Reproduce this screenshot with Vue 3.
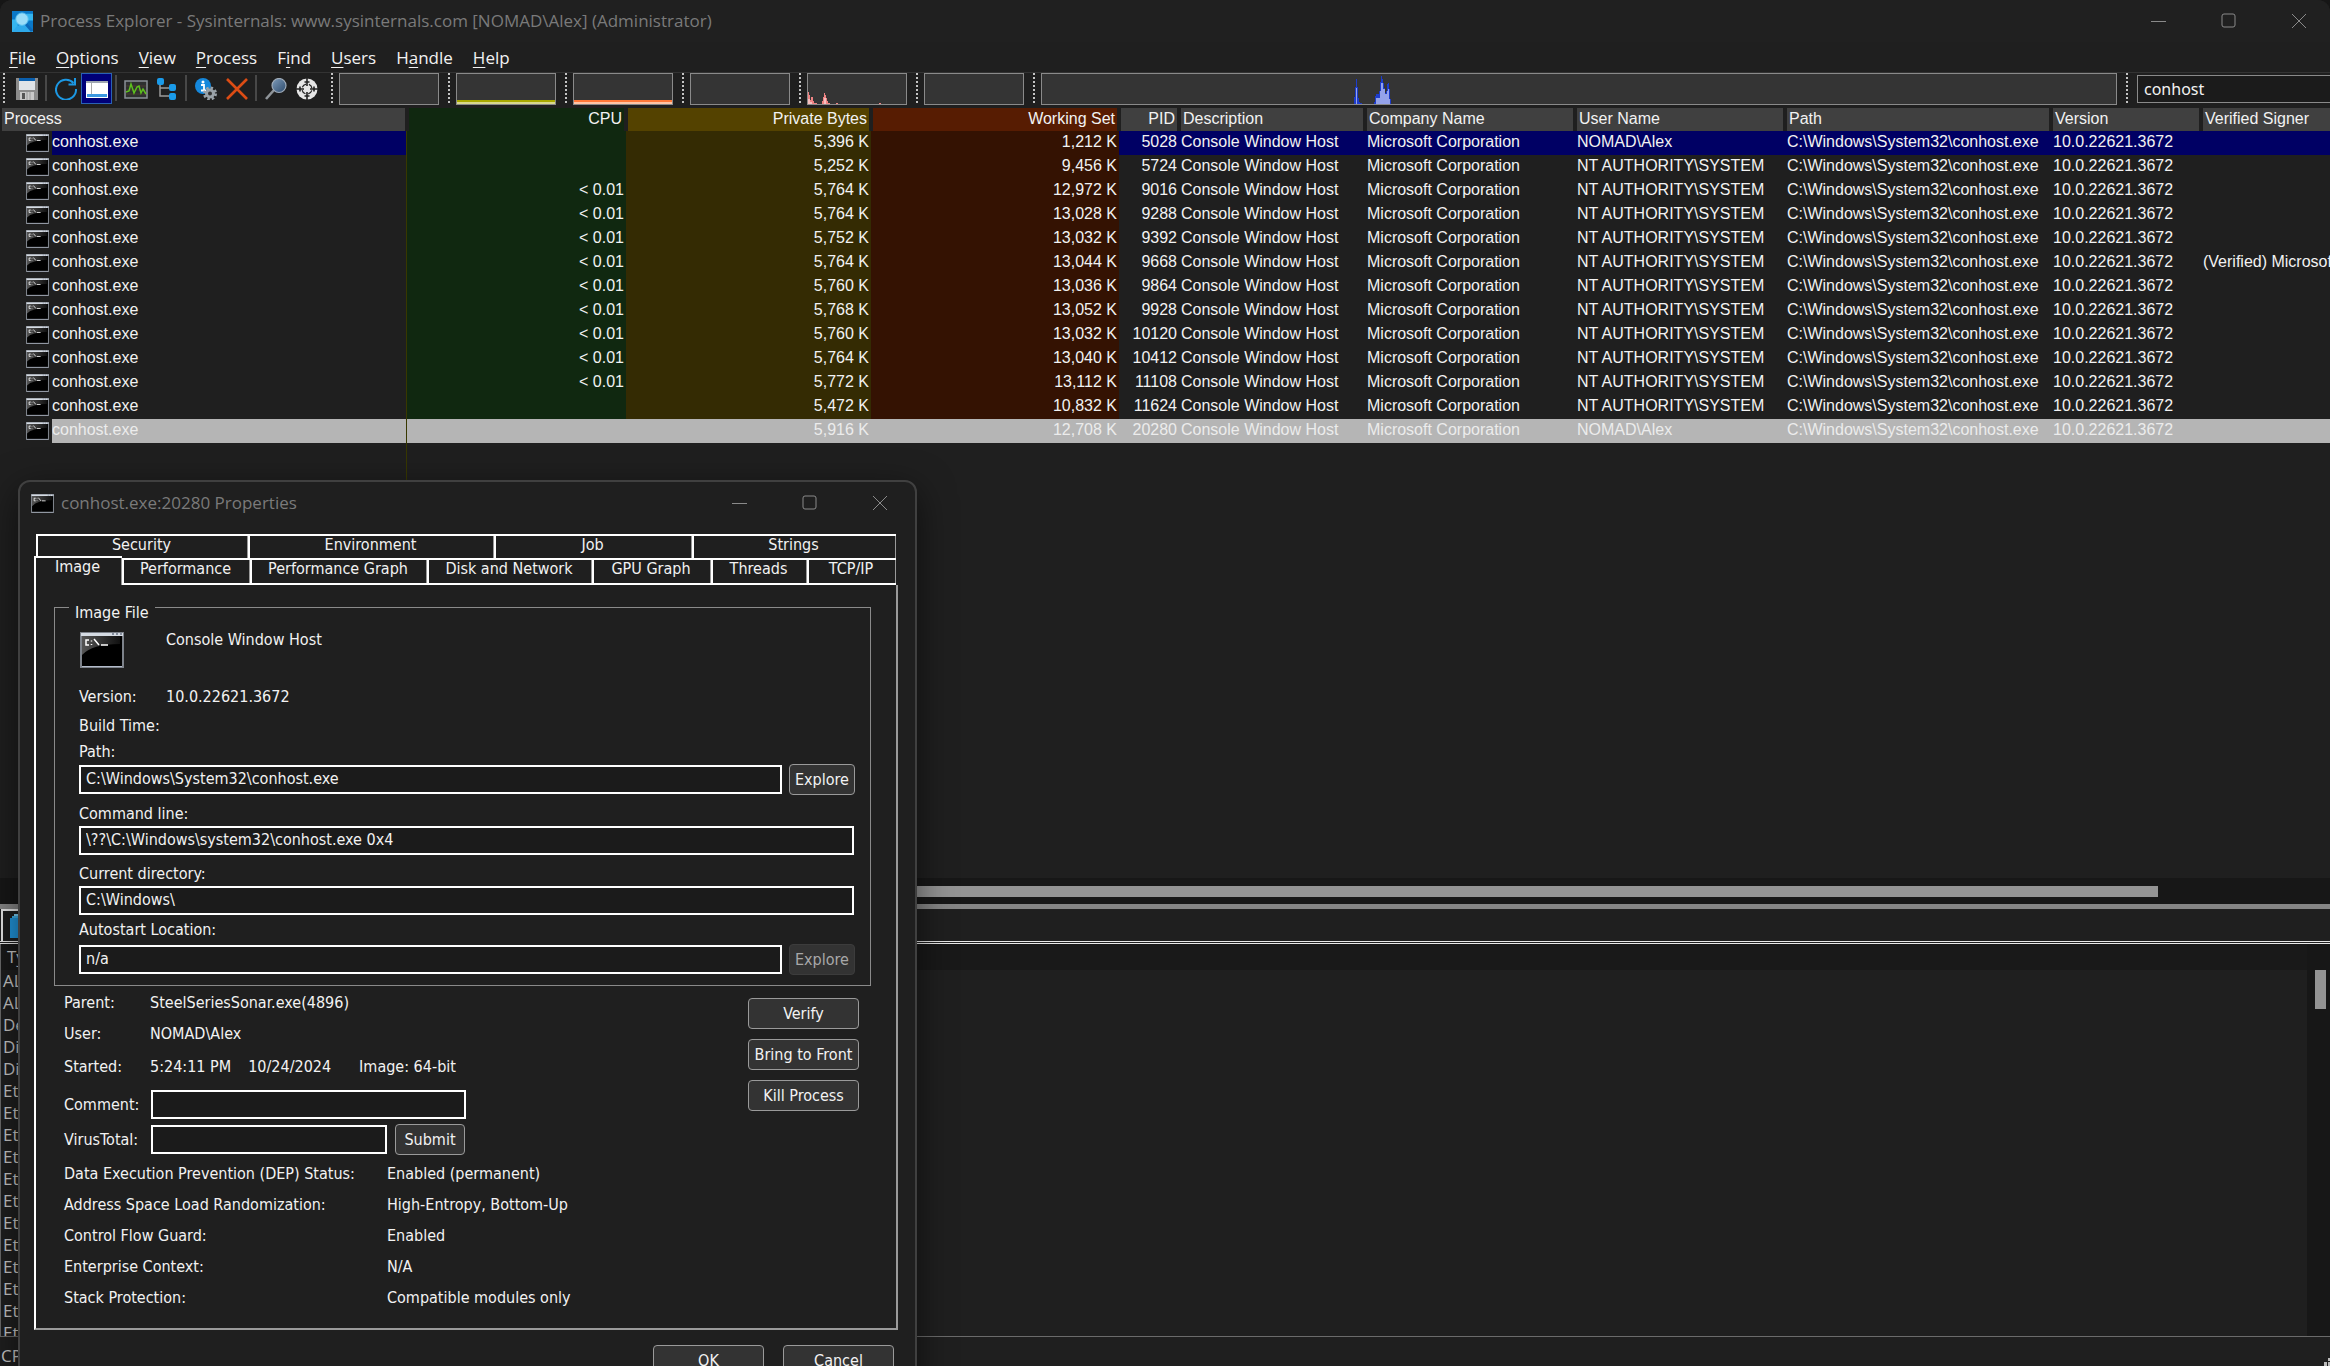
<script setup>
import { ref, reactive } from 'vue'

const menus = [
  ['', 'F', 'ile'],
  ['', 'O', 'ptions'],
  ['', 'V', 'iew'],
  ['', 'P', 'rocess'],
  ['F', 'i', 'nd'],
  ['', 'U', 'sers'],
  ['H', 'a', 'ndle'],
  ['', 'H', 'elp'],
]

const columns = [
  { key: 'name', label: 'Process' },
  { key: 'cpu', label: 'CPU' },
  { key: 'bytes', label: 'Private Bytes' },
  { key: 'ws', label: 'Working Set' },
  { key: 'pid', label: 'PID' },
  { key: 'desc', label: 'Description' },
  { key: 'company', label: 'Company Name' },
  { key: 'user', label: 'User Name' },
  { key: 'path', label: 'Path' },
  { key: 'version', label: 'Version' },
  { key: 'signer', label: 'Verified Signer' },
]

const SYSTEM = 'NT AUTHORITY\\SYSTEM'
const ALEX = 'NOMAD\\Alex'
const low = '< 0.01'

const rows = [
  ['', '5,396 K', '1,212 K', 5028, ALEX, '', 'own'],
  ['', '5,252 K', '9,456 K', 5724, SYSTEM],
  [low, '5,764 K', '12,972 K', 9016, SYSTEM],
  [low, '5,764 K', '13,028 K', 9288, SYSTEM],
  [low, '5,752 K', '13,032 K', 9392, SYSTEM],
  [low, '5,764 K', '13,044 K', 9668, SYSTEM, '(Verified) Microsoft Windows'],
  [low, '5,760 K', '13,036 K', 9864, SYSTEM],
  [low, '5,768 K', '13,052 K', 9928, SYSTEM],
  [low, '5,760 K', '13,032 K', 10120, SYSTEM],
  [low, '5,764 K', '13,040 K', 10412, SYSTEM],
  [low, '5,772 K', '13,112 K', 11108, SYSTEM],
  ['', '5,472 K', '10,832 K', 11624, SYSTEM],
  ['', '5,916 K', '12,708 K', 20280, ALEX, '', 'selected'],
].map(([cpu, bytes, ws, pid, user, signer = '', state = '']) => ({
  cpu, bytes, ws, pid, user, signer, state,
  name: 'conhost.exe',
  desc: 'Console Window Host',
  company: 'Microsoft Corporation',
  path: 'C:\\Windows\\System32\\conhost.exe',
  version: '10.0.22621.3672',
}))

const handles = [
  'ALPC Port', 'ALPC Port', 'Desktop', 'Directory', 'Directory',
  ...Array(12).fill('EtwRegistration'),
]

const backTabs = ['Security', 'Environment', 'Job', 'Strings']
const frontTabs = ['Image', 'Performance', 'Performance Graph', 'Disk and Network', 'GPU Graph', 'Threads', 'TCP/IP']

const filter = ref('conhost')
const form = reactive({
  path: 'C:\\Windows\\System32\\conhost.exe',
  command: '\\??\\C:\\Windows\\system32\\conhost.exe 0x4',
  directory: 'C:\\Windows\\',
  autostart: 'n/a',
  comment: '',
  virusTotal: '',
})

const mitigations = [
  ['Data Execution Prevention (DEP) Status:', 'Enabled (permanent)'],
  ['Address Space Load Randomization:', 'High-Entropy, Bottom-Up'],
  ['Control Flow Guard:', 'Enabled'],
  ['Enterprise Context:', 'N/A'],
  ['Stack Protection:', 'Compatible modules only'],
]
</script>

<template>
  <div class="window">
    <svg class="defs" width="0" height="0" aria-hidden="true">
      <defs>
        <linearGradient id="sheen" x1="0" y1="0" x2="1" y2="0">
          <stop offset="0" stop-color="#6a6a6a" />
          <stop offset="1" stop-color="#151515" />
        </linearGradient>
        <linearGradient id="lens" x1="0" y1="0" x2="1" y2="1">
          <stop offset="0" stop-color="#7f9cba" />
          <stop offset="1" stop-color="#2c4a6c" />
        </linearGradient>
        <symbol id="console" viewBox="0 0 44 36" preserveAspectRatio="none">
          <rect x="0" y="0" width="44" height="36" fill="#7d828a" />
          <rect x="1" y="1" width="42" height="3" fill="#d5dbe3" />
          <path d="M32 2h2M36 2h2M40 2h2" stroke="#6b7686" stroke-width="1.5" />
          <rect x="2" y="4" width="40" height="30" fill="#000" />
          <path d="M2 4H40V12Q12 12 2 23Z" fill="url(#sheen)" opacity=".8" />
          <path d="M9 8H6V13H9M11.500 8.500v1M11.500 12v1M14 7L19 13M21 13h7" fill="none" stroke="#fff" stroke-width="1.500" />
          <path d="M2 34.500H42" stroke="#b4bccb" />
        </symbol>
      </defs>
    </svg>

    <header class="titlebar">
      <svg class="app-icon" viewBox="0 0 22 22">
        <rect width="22" height="22" fill="#0a78c8" />
        <path d="M0 9h6v13H0zM15 3h7v7h-7z" fill="#35b5ee" />
        <path d="M14 12l8 10H0l5-6z" fill="#2ea9ea" />
        <path d="M14 13l7 8" stroke="#0c68b8" stroke-width="3" />
        <circle cx="10.500" cy="8.500" r="6.500" fill="#9adcf8" stroke="#5cc3f2" />
      </svg>
      <h1>Process Explorer - Sysinternals: www.sysinternals.com [NOMAD\Alex] (Administrator)</h1>
      <div class="controls">
        <button aria-label="Minimize"><svg viewBox="0 0 16 16"><path d="M0 8.500H15" /></svg></button>
        <button aria-label="Maximize"><svg viewBox="0 0 16 16"><rect x="1" y="1" width="13" height="13" rx="2" /></svg></button>
        <button aria-label="Close"><svg viewBox="0 0 16 16"><path d="M1 1L15 15M15 1L1 15" /></svg></button>
      </div>
    </header>

    <nav class="menubar">
      <button v-for="m in menus" :key="m.join('')">{{ m[0] }}<u>{{ m[1] }}</u>{{ m[2] }}</button>
    </nav>

    <div class="toolbar">
      <i class="grip first"></i>
      <button aria-label="Save">
        <svg viewBox="0 0 22 22">
          <rect width="22" height="22" fill="#8b8b8b" />
          <rect x="3" width="16" height="12" fill="#dfe3e8" /><rect x="3" width="16" height="3" fill="#0a5fae" />
          <rect x="4" y="14" width="14" height="8" fill="#c9c9c9" /><rect x="6" y="15" width="3" height="6" fill="#555" />
          <path d="M11 14v8M14 14v8" stroke="#9a9a9a" />
        </svg>
      </button>
      <i class="sep"></i>
      <button aria-label="Refresh">
        <svg viewBox="0 0 22 22"><path d="M18.500 5A10 10 0 1 0 21 11M20 0V6.500H13.500" fill="none" stroke="#1c97e2" stroke-width="2" /></svg>
      </button>
      <button class="pressed" aria-label="Show lower pane">
        <svg viewBox="0 0 22 22">
          <rect x="0" y="3" width="22" height="17" fill="#fff" /><rect x="0" y="3" width="22" height="2" fill="#9fa6b0" />
          <path d="M5.500 5V16" stroke="#aaa" /><rect x="1" y="16" width="20" height="3" fill="#3c98e0" />
        </svg>
      </button>
      <i class="sep"></i>
      <button aria-label="System information">
        <svg class="wide" viewBox="0 0 24 22">
          <rect x="1" y="3" width="22" height="17" fill="#2e3030" stroke="#8a9096" stroke-width="1.500" />
          <path d="M2 8h20M2 12h20M2 16h20" stroke="#4a3a30" />
          <path d="M2 14L5 13L7 6L10 15L13 9L15 8L17 15L19 11L22 16" fill="none" stroke="#5cc01e" stroke-width="1.500" />
        </svg>
      </button>
      <button aria-label="Process tree">
        <svg viewBox="0 0 22 22">
          <path d="M4 6V18H14M4 10H14" fill="none" stroke="#9a9a9a" stroke-width="1.500" />
          <rect x="1" y="0" width="7" height="7" rx="2" fill="#1a9bea" />
          <rect x="13" y="6" width="7" height="7" rx="2" fill="#1a9bea" /><rect x="13" y="15" width="7" height="7" rx="2" fill="#1a9bea" />
        </svg>
      </button>
      <i class="sep"></i>
      <button aria-label="Properties">
        <svg viewBox="0 0 22 22">
          <circle cx="8" cy="8" r="8" fill="#1588dc" /><circle cx="8" cy="4" r="1.500" fill="#fff" /><path d="M6 7h3v5M6 12.500h5" stroke="#fff" stroke-width="1.800" fill="none" />
          <circle cx="15" cy="15.500" r="5.500" fill="none" stroke="#9aa2a8" stroke-width="3" stroke-dasharray="2.400 1.900" />
          <circle cx="15" cy="15.500" r="3.500" fill="#333" stroke="#9aa2a8" stroke-width="3" />
        </svg>
      </button>
      <button aria-label="Kill process">
        <svg viewBox="0 0 22 22"><path d="M1 1L21 21M21 1L1 21" stroke="#dc4c14" stroke-width="2.600" /></svg>
      </button>
      <i class="sep"></i>
      <button aria-label="Find handle">
        <svg viewBox="0 0 22 22">
          <path d="M1 21L9 12" stroke="#8f9499" stroke-width="2.600" />
          <circle cx="14" cy="7.500" r="7" fill="url(#lens)" stroke="#9fabb8" stroke-width="1.200" />
        </svg>
      </button>
      <button aria-label="Find window's process">
        <svg viewBox="0 0 22 22">
          <circle cx="11" cy="11" r="10.500" fill="#e6e6e6" />
          <circle cx="11" cy="11" r="5" fill="none" stroke="#222" stroke-width="1.200" stroke-dasharray="5 2.850" stroke-dashoffset="-1.400" />
          <path d="M11 0V8M11 14V22M0 11H8M14 11H22M8.500 4h5M8.500 18h5M4 8.500v5M18 8.500v5" stroke="#222" stroke-width="1.600" />
        </svg>
      </button>

      <i class="grip"></i><div class="graph"></div>
      <i class="grip"></i><div class="graph commit"></div>
      <i class="grip"></i><div class="graph physical"></div>
      <i class="grip"></i><div class="graph"></div>
      <i class="grip"></i>
      <div class="graph">
        <svg class="plot">
          <path d="M0 30V18H1V21H2V26H3V23H5V27H6V29H9V30ZM14 30V27H15V23H16V19H17V21H18V24H19V27H20V29H22V30ZM28 30v-1h2v1zM71 30v-1h2v1z" fill="#f08484" />
          <path d="M0 30V25H2V28H4V30ZM16 30V24H18V30Z" fill="#f8c0c0" />
        </svg>
      </div>
      <i class="grip"></i><div class="graph"></div>
      <i class="grip"></i>
      <div class="graph history">
        <svg class="plot">
          <path d="M312 30V23H313V13H314V5H315V13H316V24H317V28H318V29H320V30ZM332 30V28H333V22H334V20H337V17H338V8H339V2H340V5H341V9H342V14H343V19H344V17H345V10H346V9H347V15H348V25H349V30Z" fill="#1d3ccb" />
          <path d="M314 30V14H315V30ZM334 30V24H338V17H339V9H341V15H343V20H345V17H346V15H347V25H348V30Z" fill="#94a2ea" />
        </svg>
      </div>
      <i class="grip last"></i>
      <input v-model="filter" class="filter" type="text" aria-label="Filter by name" />
    </div>

    <main class="processes">
      <table>
        <colgroup><col v-for="c in columns" :key="c.key" :class="'w-' + c.key" /></colgroup>
        <thead>
          <tr><th v-for="c in columns" :key="c.key" :class="c.key">{{ c.label }}</th></tr>
        </thead>
        <tbody>
          <tr v-for="r in rows" :key="r.pid" :class="r.state">
            <td v-for="c in columns" :key="c.key" :class="c.key">
              <div v-if="c.key === 'name'" class="proc">
                <svg class="console-icon"><use href="#console" /></svg><span>{{ r.name }}</span>
              </div>
              <template v-else>{{ r[c.key] }}</template>
            </td>
          </tr>
        </tbody>
      </table>
    </main>
    <div class="hscroll"><div class="thumb"></div></div>
    <div class="splitter"></div>

    <section class="lower">
      <div class="lower-tabs">
        <button aria-label="Handles">
          <svg viewBox="0 0 22 24"><path d="M4 0H20V20H4Z" fill="#7fd0f5" /><path d="M2 2H18V22H2Z" fill="#3fb1ea" /><path d="M0 4H16V24H0Z" fill="#2196dc" /></svg>
        </button>
      </div>
      <div class="handles">
        <table>
          <thead><tr><th>Type</th></tr></thead>
          <tbody><tr v-for="(h, i) in handles" :key="i"><td>{{ h }}</td></tr></tbody>
        </table>
        <div class="vscroll"><div class="thumb"></div></div>
      </div>
    </section>
    <footer class="status"><span>CPU Usage:</span><svg class="resize" viewBox="0 0 6 8"><path d="M4 0h2v3H4zM0 4h3v4H0zM4 4h2v4H4z" fill="#bbb" /></svg></footer>

    <section class="dialog" role="dialog" aria-label="conhost.exe:20280 Properties">
      <header class="dialog-title">
        <svg class="console-icon"><use href="#console" /></svg>
        <h2>conhost.exe:20280 Properties</h2>
        <div class="controls">
          <button aria-label="Minimize"><svg viewBox="0 0 16 16"><path d="M0 8.500H15" /></svg></button>
          <button aria-label="Maximize"><svg viewBox="0 0 16 16"><rect x="1" y="1" width="13" height="13" rx="2" /></svg></button>
          <button aria-label="Close"><svg viewBox="0 0 16 16"><path d="M1 1L15 15M15 1L1 15" /></svg></button>
        </div>
      </header>

      <div class="tabs back"><button v-for="t in backTabs" :key="t">{{ t }}</button></div>
      <div class="tabs front"><button v-for="(t, i) in frontTabs" :key="t" :class="{ active: i === 0 }">{{ t }}</button></div>

      <div class="page">
        <fieldset>
          <legend>Image File</legend>
          <div class="headline">
            <svg class="big-icon"><use href="#console" /></svg>
            <p>Console Window Host</p>
          </div>
          <div class="pair version"><span>Version:</span><span>10.0.22621.3672</span></div>
          <div class="pair build"><span>Build Time:</span></div>
          <div class="field tight">
            <label for="path">Path:</label>
            <div class="line"><input id="path" v-model="form.path" type="text" /><button>Explore</button></div>
          </div>
          <div class="field">
            <label for="command">Command line:</label>
            <input id="command" v-model="form.command" type="text" />
          </div>
          <div class="field">
            <label for="directory">Current directory:</label>
            <input id="directory" v-model="form.directory" type="text" />
          </div>
          <div class="field tight autostart">
            <label for="autostart">Autostart Location:</label>
            <div class="line"><input id="autostart" v-model="form.autostart" type="text" /><button disabled>Explore</button></div>
          </div>
        </fieldset>

        <div class="details">
          <div class="facts">
            <div class="pair"><span>Parent:</span><span>SteelSeriesSonar.exe(4896)</span></div>
            <div class="pair"><span>User:</span><span>NOMAD\Alex</span></div>
            <div class="pair started"><span>Started:</span><span>5:24:11 PM</span><span class="date">10/24/2024</span><span>Image: 64-bit</span></div>
            <div class="entry"><label for="comment">Comment:</label><input id="comment" v-model="form.comment" type="text" /></div>
            <div class="entry"><label for="vt">VirusTotal:</label><input id="vt" v-model="form.virusTotal" type="text" /><button>Submit</button></div>
          </div>
          <div class="actions">
            <button>Verify</button>
            <button>Bring to Front</button>
            <button>Kill Process</button>
          </div>
        </div>

        <dl>
          <div v-for="m in mitigations" :key="m[0]"><dt>{{ m[0] }}</dt><dd>{{ m[1] }}</dd></div>
        </dl>
      </div>

      <div class="dialog-buttons"><button>OK</button><button>Cancel</button></div>
    </section>
  </div>
</template>

<style>
html, body { background: #161616; overflow: hidden; }
</style>

<style scoped>
* { box-sizing: border-box; }
button, input { font: inherit; color: inherit; margin: 0; }
button { background: none; border: 0; padding: 0; white-space: nowrap; }
h1, h2, p, dl, dd { margin: 0; font-weight: 400; }
svg { display: block; flex: none; }
.defs { position: absolute; }

.window {
  position: relative;
  display: flex;
  flex-direction: column;
  height: 100vh;
  overflow: hidden;
  border-radius: 12px 12px 0 0;
  background: #1f1f1f;
  color: #f2f2f2;
  font: 17px/24px "Open Sans", sans-serif;
}

.titlebar { display: flex; align-items: center; height: 42px; padding-left: 12px; background: #202020; flex: none; }
.app-icon { width: 21px; height: 21px; }
h1, h2 { flex: 1; margin-left: 7px; font-size: 17px; line-height: 24px; color: #7a7a7a; white-space: nowrap; }
.controls { display: flex; gap: 10px; }
.titlebar .controls { margin-right: 1px; }
.controls button { display: grid; place-items: center; width: 60px; height: 40px; }
.controls svg { width: 16px; height: 16px; fill: none; stroke: #8a8a8a; }

.menubar { display: flex; gap: 20px; height: 31px; padding: 4px 9px 0; border-bottom: 1px solid #333; flex: none; }
.menubar button { height: 24px; }
u { text-underline-offset: 3px; }

.toolbar { display: flex; height: 35px; flex: none; }
.toolbar button { display: grid; place-items: center; width: 31px; height: 31px; flex: none; }
.toolbar button svg { width: 22px; height: 22px; }
.toolbar button svg.wide { width: 24px; }
.toolbar .pressed { background: #000078; border: 1px solid #2a62b4; }
.sep { width: 2px; height: 26px; margin: 2px 3px 0; background: #484848; flex: none; }
.grip { width: 2px; height: 30px; margin: 0 6px 0 9px; flex: none; background: repeating-linear-gradient(#c4c4c4 0 2px, transparent 2px 4px); }
.grip.first { margin-left: 3px; }
.grip.last { margin-right: 9px; }
.graph { width: 100px; height: 32px; border: 1px solid #8a8a8a; background: #343434; flex: none; }
.graph.commit { background: linear-gradient(#343434 26px, #a8a800 26px 28px, #d8d88c 28px); }
.graph.physical { background: linear-gradient(#343434 26px, #ff7838 26px 28px, #ffc4a4 28px); }
.graph.history { flex: 1; }
.plot { width: 100%; height: 30px; shape-rendering: crispEdges; }
.filter { width: 193px; height: 28px; margin-top: 2px; padding: 0 6px; border: 1px solid #8a8a8a; border-right: 0; background: #1b1b1b; font-family: "Noto Sans", sans-serif; font-size: 16px; flex: none; }

.processes {
  flex: 1;
  min-height: 0;
  overflow: hidden;
  background: linear-gradient(#383800, #383800) 406px 24px / 1px 100% no-repeat;
  font: 16px/20px "Liberation Sans", Arial, sans-serif;
}
.processes table { width: 100%; table-layout: fixed; border-collapse: separate; border-spacing: 0; }
.w-name { width: 407px; }
.w-cpu { width: 219px; }
.w-bytes { width: 245px; }
.w-ws { width: 248px; }
.w-pid { width: 60px; }
.w-desc { width: 186px; }
.w-company, .w-user { width: 210px; }
.w-path { width: 266px; }
.w-version { width: 150px; }
.processes th, .processes td { overflow: hidden; white-space: nowrap; text-align: left; font-weight: 400; }
.processes th { height: 23px; padding: 0 2px 2px; border: solid transparent; border-width: 0 2px; background: #404040; background-clip: padding-box; }
.processes th.signer { border-right: 0; }
.processes td { height: 24px; padding: 0 2px 3px; }
.processes .cpu, .processes .bytes, .processes .ws, .processes .pid { text-align: right; }
.processes .cpu { background-color: #102810; }
.processes th.bytes { background-color: #544200; }
.processes th.ws { background-color: #571c02; }
td.bytes { background-color: #342b03; }
td.ws { background-color: #341202; }
.processes td.name { padding: 0 0 0 26px; border-right: 1px solid #383800; }
.proc { display: flex; align-items: center; height: 24px; }
.proc span { flex: 1; height: 24px; margin-left: 3px; padding-top: 1px; }
.console-icon { width: 23px; height: 19px; }
.proc .console-icon { height: 18px; margin-bottom: 1px; }
.own .proc span, .own td:nth-child(n + 5) { background: #000064; }
.selected { color: #ececec; }
.selected .proc span, .selected td:not(.name) { background: #b5b5b5; }

.hscroll { height: 26px; padding-top: 8px; background: #171717; flex: none; }
.hscroll .thumb { height: 11px; margin: 0 172px 0 24px; background: #949494; }
.splitter { height: 5px; background: #858585; flex: none; }

.lower { display: flex; flex-direction: column; height: 427px; flex: none; }
.lower-tabs { height: 35px; border-bottom: 3px double #e8e8e8; flex: none; }
.lower-tabs button { height: 32px; width: 112px; margin-left: 1px; padding-left: 7px; border: solid #e8e8e8; border-width: 2px 0 0 2px; }
.lower-tabs svg { width: 22px; height: 24px; }
.handles { flex: 1; min-height: 0; display: flex; border-left: 1px solid #6a6a6a; color: #c8c8c8; overflow: hidden; }
.handles table { flex: 1; display: block; height: 100%; overflow: hidden; border-spacing: 0; }
.handles thead, .handles tbody, .handles tr { display: block; }
.handles th { display: block; height: 26px; padding: 1px 6px; text-align: left; font-weight: 400; background: #191919; }
.handles td { display: block; height: 22px; padding: 0 2px; line-height: 22px; }
.vscroll { width: 23px; padding: 26px 4px 0 8px; background: #171717; }
.vscroll .thumb { height: 39px; background: #949494; }
.status { display: flex; justify-content: space-between; align-items: flex-end; height: 30px; border-top: 1px solid #6a6a6a; color: #c8c8c8; flex: none; }
.status span { padding: 0 1px; line-height: 20px; }
.resize { width: 6px; height: 8px; }

.dialog {
  position: absolute;
  left: 18px;
  top: 480px;
  width: 899px;
  padding: 0 17px 14px 14px;
  border: 2px solid #404040;
  border-radius: 12px;
  background: #1f1f1f;
  box-shadow: 0 10px 36px rgba(0, 0, 0, .55);
  font: 16px/22px "DejaVu Sans Condensed", "DejaVu Sans", Tahoma, sans-serif;
}
.dialog-title { display: flex; align-items: center; height: 42px; margin: 0 -12px 10px -3px; font-family: "Open Sans", sans-serif; }

.tabs { display: grid; position: relative; }
.tabs button { display: flex; justify-content: center; padding-right: 3px; border: solid #fff; border-width: 2px 0 0 2px; box-shadow: inset -1px 0 #9a9a9a; line-height: 18px; background: #1f1f1f; }
.tabs.back { grid-template-columns: 212fr 246fr 198fr 204fr; height: 24px; margin: 0 2px; }
.tabs.front { grid-template-columns: 88fr 128fr 177fr 165fr 119fr 96fr 89fr; height: 29px; margin: -2px 2px 0 0; }
.tabs.front button:not(.active) { margin-top: 2px; border-bottom-width: 2px; }

.page { padding: 17px 25px 15px 18px; border: solid; border-width: 0 2px 2px; border-color: #fff #9a9a9a #9a9a9a #fff; }
fieldset { margin: 0; padding: 17px 15px 10px 14px; border: 1px solid #8a8a8a; min-width: 0; }
legend { height: 10px; padding: 0 6px; line-height: 22px; }
.headline { display: flex; height: 44px; padding-left: 11px; }
.big-icon { width: 44px; height: 36px; margin-top: 3px; }
.headline p { margin-left: 42px; }
.pair { display: flex; }
fieldset .pair { padding-left: 10px; }
fieldset .pair span:first-child { width: 87px; }
.version { margin-top: 13px; }
.build { margin-top: 7px; }
.field { display: flex; flex-direction: column; gap: 1px; margin-top: 8px; padding-left: 10px; }
.field.tight { margin-top: 4px; }
.field.autostart { gap: 3px; }
.field > input { margin-right: 1px; }
.line { display: flex; align-items: center; gap: 7px; }
.line input { flex: 1; }
.line button { width: 66px; }
.dialog input { height: 29px; padding: 0 5px 2px; border: 2px solid #fff; background: #1b1b1b; min-width: 0; }
.line button, .entry button, .actions button, .dialog-buttons button { height: 31px; border: 1px solid #9a9a9a; border-radius: 4px; background: #333; }
.dialog .line button:disabled { border-color: #3c3c3c; color: #a8a8a8; }

.details { display: flex; justify-content: space-between; padding: 1px 12px 0 10px; }
.facts .pair { height: 31px; align-items: center; }
.facts .pair span:first-child { width: 86px; }
.facts .started { height: 36px; }
.date { margin: 0 28px 0 17px; }
.entry { display: flex; align-items: center; margin-top: 5px; }
.entry label { width: 87px; }
#comment { width: 315px; }
#vt { width: 236px; }
.entry button { width: 70px; margin-left: 8px; }
.actions { display: flex; flex-direction: column; gap: 10px; padding-top: 11px; }
.actions button, .dialog-buttons button { width: 111px; }

dl { padding: 3px 0 0 10px; }
dl div { display: flex; align-items: center; height: 31px; }
dt { width: 323px; }
.dialog-buttons { display: flex; justify-content: flex-end; gap: 19px; padding: 15px 4px 0 0; }
</style>
